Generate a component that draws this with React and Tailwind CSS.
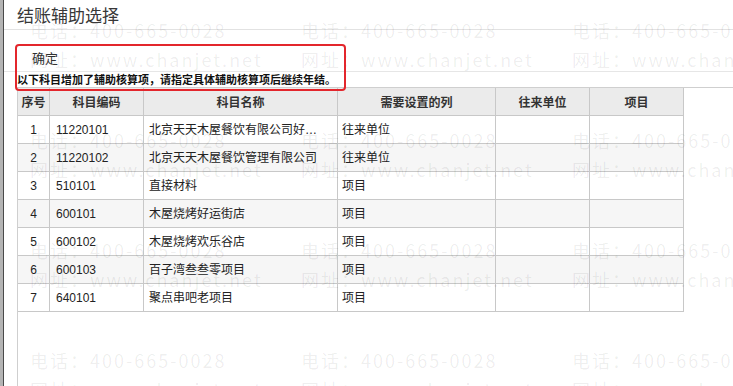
import React from "react";

const rows = [
  ["1", "11220101", "北京天天木屋餐饮有限公司好…", "往来单位"],
  ["2", "11220102", "北京天天木屋餐饮管理有限公司", "往来单位"],
  ["3", "510101", "直接材料", "项目"],
  ["4", "600101", "木屋烧烤好运街店", "项目"],
  ["5", "600102", "木屋烧烤欢乐谷店", "项目"],
  ["6", "600103", "百子湾叁叁零项目", "项目"],
  ["7", "640101", "聚点串吧老项目", "项目"],
];

const headers = ["序号", "科目编码", "科目名称", "需要设置的列", "往来单位", "项目"];

export default function App() {
  const marks = Array.from({ length: 12 });
  return (
    <div className="relative w-[733px] h-[386px] overflow-hidden bg-white flex font-['Liberation_Sans','Noto_Sans_CJK_SC',sans-serif] text-[#222]">
      <div className="w-[4px] shrink-0 bg-[#b4b4b4] border-r border-[#4a4a4a]" />
      <div className="flex-1 flex flex-col">
        <div className="h-[30px] shrink-0 border-b border-[#e2e2e2] pl-[13px] flex items-center text-[17px] text-[#383838] font-['Noto_Sans_CJK_SC',sans-serif]">
          结账辅助选择
        </div>
        <div className="h-[42px] shrink-0 border-b border-[#e6e6e6] pl-[28px] pt-[20px] text-[13px] leading-[16px] text-[#333] font-['Noto_Sans_CJK_SC',sans-serif]">
          确定
        </div>
        <div className="h-[15px] shrink-0 pl-[13px] text-[11px] leading-[15px] font-bold text-[#111] font-['Noto_Sans_CJK_SC',sans-serif] whitespace-nowrap">
          以下科目增加了辅助核算项，请指定具体辅助核算项后继续年结。
        </div>
        <div className="flex-1 ml-[13px] border-l border-t border-[#cfcfcf]">
          <div className="w-[666px] grid grid-cols-[32px_94px_194px_158px_94px_94px] text-[12px]">
            {headers.map((h) => (
              <div
                key={h}
                className="h-[28px] border-r border-b border-[#c8c8c8] bg-[#ebebeb] flex items-center justify-center font-bold text-[#333] font-['Noto_Sans_CJK_SC',sans-serif]"
              >
                {h}
              </div>
            ))}
            {rows.map((r, i) => {
              const bg = i % 2 === 1 ? "bg-[#f6f6f6]" : "bg-white";
              return (
                <React.Fragment key={r[0]}>
                  <div className={`h-[28px] border-r border-b border-[#c8c8c8] flex items-center justify-center ${bg}`}>{r[0]}</div>
                  <div className={`h-[28px] border-r border-b border-[#c8c8c8] flex items-center pl-[6px] ${bg}`}>{r[1]}</div>
                  <div className={`h-[28px] border-r border-b border-[#c8c8c8] flex items-center pl-[5px] whitespace-nowrap overflow-hidden ${bg}`}>{r[2]}</div>
                  <div className={`h-[28px] border-r border-b border-[#c8c8c8] flex items-center pl-[4px] ${bg}`}>{r[3]}</div>
                  <div className={`h-[28px] border-r border-b border-[#c8c8c8] ${bg}`} />
                  <div className={`h-[28px] border-r border-b border-[#c8c8c8] ${bg}`} />
                </React.Fragment>
              );
            })}
          </div>
        </div>
      </div>

      <div className="pointer-events-none absolute inset-0 pl-[30px] pt-[20px] grid grid-cols-[271px_271px_271px] auto-rows-[110px] font-['Noto_Sans_CJK_SC',sans-serif] text-[18px] leading-[20px] tracking-[2px] text-black/[0.07] whitespace-nowrap">
        {marks.map((_, i) => (
          <div key={i} className="flex flex-col gap-[9px]">
            <div>电话：400-665-0028</div>
            <div>网址：www.chanjet.net</div>
          </div>
        ))}
      </div>

      <div className="pointer-events-none absolute left-[15px] top-[44px] w-[331px] h-[47px] border-2 border-[#e3262c] rounded-[4px]" />
    </div>
  );
}
